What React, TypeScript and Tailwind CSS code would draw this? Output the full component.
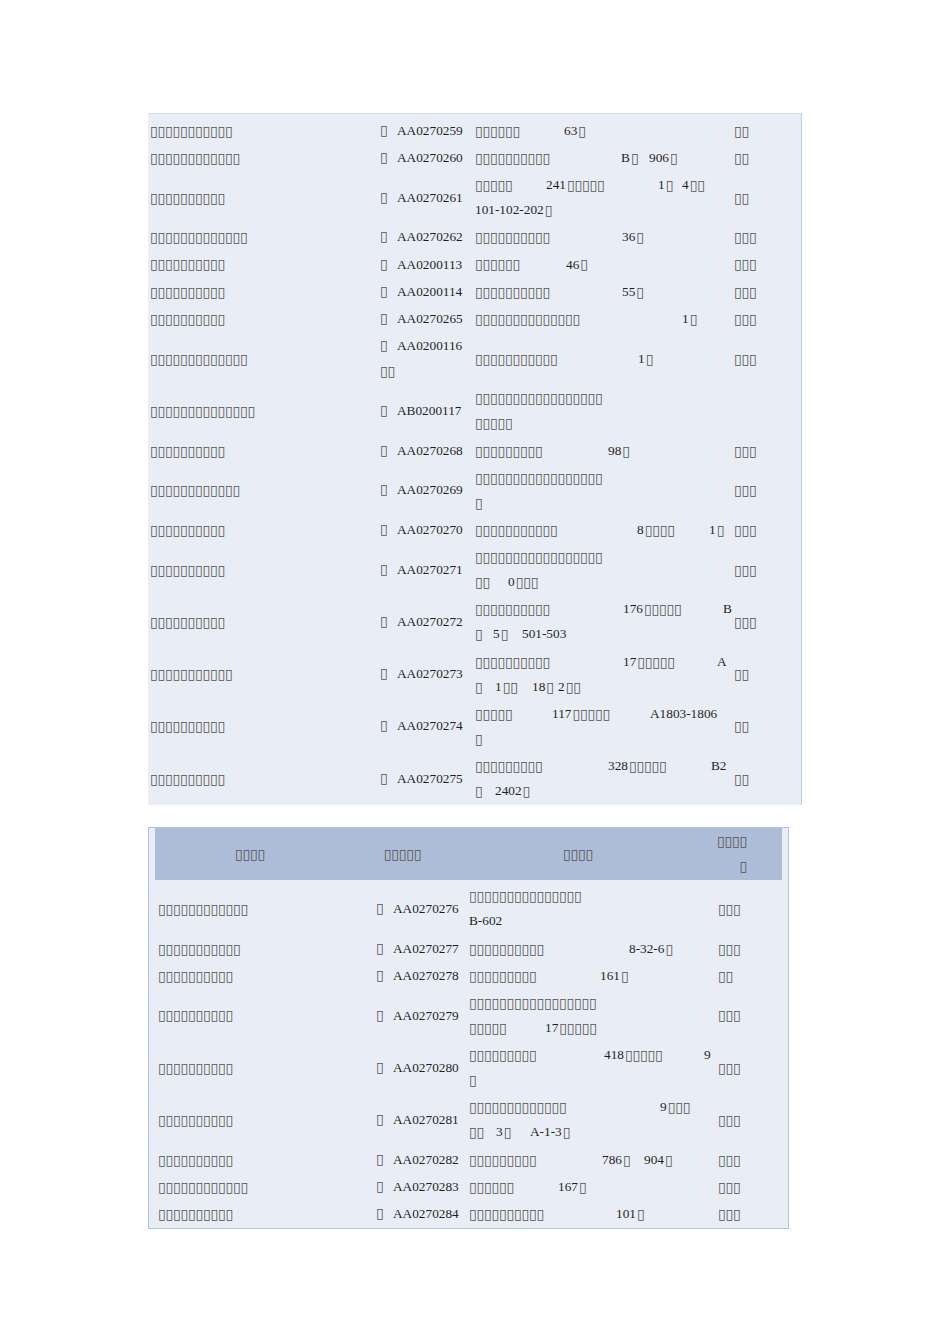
import React from "react";

type Piece = [string, number]; // text, x offset inside the cell
type Row = { name: number; code: string[]; addr: Piece[][]; last: number };

const b = (n: number) => "□".repeat(n);

// first table (no header)
const firstRows: Row[] = [
  { name: 11, code: ["□ AA0270259"], addr: [[[b(6), 0], ["63□", 89]]], last: 2 },
  { name: 12, code: ["□ AA0270260"], addr: [[[b(10), 0], ["B□", 146], ["906□", 174]]], last: 2 },
  {
    name: 10,
    code: ["□ AA0270261"],
    addr: [
      [[b(5), 0], ["241" + b(5), 71], ["1□", 183], ["4□□", 207]],
      [["101-102-202□", 0]],
    ],
    last: 2,
  },
  { name: 13, code: ["□ AA0270262"], addr: [[[b(10), 0], ["36□", 147]]], last: 3 },
  { name: 10, code: ["□ AA0200113"], addr: [[[b(6), 0], ["46□", 91]]], last: 3 },
  { name: 10, code: ["□ AA0200114"], addr: [[[b(10), 0], ["55□", 147]]], last: 3 },
  { name: 10, code: ["□ AA0270265"], addr: [[[b(14), 0], ["1□", 207]]], last: 3 },
  { name: 13, code: ["□ AA0200116", "□□"], addr: [[[b(11), 0], ["1□", 163]]], last: 3 },
  { name: 14, code: ["□ AB0200117"], addr: [[[b(17), 0]], [[b(5), 0]]], last: 0 },
  { name: 10, code: ["□ AA0270268"], addr: [[[b(9), 0], ["98□", 133]]], last: 3 },
  { name: 12, code: ["□ AA0270269"], addr: [[[b(17), 0]], [[b(1), 0]]], last: 3 },
  { name: 10, code: ["□ AA0270270"], addr: [[[b(11), 0], ["8" + b(4), 162], ["1□", 234]]], last: 3 },
  { name: 10, code: ["□ AA0270271"], addr: [[[b(17), 0]], [[b(2), 0], ["0□□□", 33]]], last: 3 },
  {
    name: 10,
    code: ["□ AA0270272"],
    addr: [
      [[b(10), 0], ["176" + b(5), 148], ["B", 248]],
      [[b(1), 0], ["5□", 18], ["501-503", 47]],
    ],
    last: 3,
  },
  {
    name: 11,
    code: ["□ AA0270273"],
    addr: [
      [[b(10), 0], ["17" + b(5), 148], ["A", 242]],
      [[b(1), 0], ["1□□", 20], ["18□", 57], ["2□□", 83]],
    ],
    last: 2,
  },
  {
    name: 10,
    code: ["□ AA0270274"],
    addr: [
      [[b(5), 0], ["117" + b(5), 77], ["A1803-1806", 175]],
      [[b(1), 0]],
    ],
    last: 2,
  },
  {
    name: 10,
    code: ["□ AA0270275"],
    addr: [
      [[b(9), 0], ["328" + b(5), 133], ["B2", 236]],
      [[b(1), 0], ["2402□", 20]],
    ],
    last: 2,
  },
];

// second table (with header)
const secondRows: Row[] = [
  { name: 12, code: ["□ AA0270276"], addr: [[[b(15), 0]], [["B-602", 0]]], last: 3 },
  { name: 11, code: ["□ AA0270277"], addr: [[[b(10), 0], ["8-32-6□", 160]]], last: 3 },
  { name: 10, code: ["□ AA0270278"], addr: [[[b(9), 0], ["161□", 131]]], last: 2 },
  { name: 10, code: ["□ AA0270279"], addr: [[[b(17), 0]], [[b(5), 0], ["17" + b(5), 76]]], last: 3 },
  {
    name: 10,
    code: ["□ AA0270280"],
    addr: [
      [[b(9), 0], ["418" + b(5), 135], ["9", 235]],
      [[b(1), 0]],
    ],
    last: 3,
  },
  {
    name: 10,
    code: ["□ AA0270281"],
    addr: [
      [[b(13), 0], ["9□□□", 191]],
      [[b(2), 0], ["3□", 27], ["A-1-3□", 61]],
    ],
    last: 3,
  },
  { name: 10, code: ["□ AA0270282"], addr: [[[b(9), 0], ["786□", 133], ["904□", 175]]], last: 3 },
  { name: 12, code: ["□ AA0270283"], addr: [[[b(6), 0], ["167□", 89]]], last: 3 },
  { name: 10, code: ["□ AA0270284"], addr: [[[b(10), 0], ["101□", 147]]], last: 3 },
];

function Box() {
  return (
    <span className="inline-block w-[7.5px] text-center font-['DejaVu_Sans',sans-serif] text-[14px] leading-none text-[#555]">
      ▯
    </span>
  );
}

// text with missing-glyph boxes
function Txt({ s }: { s: string }) {
  const parts = s.split(/(□)/).filter(Boolean);
  return (
    <>
      {parts.map((p, i) =>
        p === "□" ? (
          <Box key={i} />
        ) : (
          <span key={i} className="mr-px">
            {p}
          </span>
        )
      )}
    </>
  );
}

function Line({ pieces }: { pieces: Piece[] }) {
  return (
    <div className="flex h-[25px] items-center whitespace-nowrap">
      {pieces.map(([t, x], i) => {
        const next = pieces[i + 1];
        return (
          <span key={i} className="flex shrink-0 items-center" style={next ? { width: next[1] - x } : undefined}>
            <Txt s={t} />
          </span>
        );
      })}
    </div>
  );
}

function Code({ line }: { line: string }) {
  if (!line.startsWith("□ ")) return <Line pieces={[[line, 0]]} />;
  return (
    <div className="flex h-[25px] items-center whitespace-nowrap">
      <span className="inline-block w-[17px]">
        <Box />
      </span>
      <span>{line.slice(2)}</span>
    </div>
  );
}

type Widths = { c1: string; c2: string; c3: string; c4: string };

function TableRow({ row, w }: { row: Row; w: Widths }) {
  return (
    <div className="flex py-[1.12px]">
      <div className={`flex flex-col justify-center ${w.c1}`}>
        <Line pieces={[[b(row.name), 0]]} />
      </div>
      <div className={`flex flex-col justify-center ${w.c2}`}>
        {row.code.map((c, i) => (
          <Code key={i} line={c} />
        ))}
      </div>
      <div className={`flex flex-col justify-center ${w.c3}`}>
        {row.addr.map((l, i) => (
          <Line key={i} pieces={l} />
        ))}
      </div>
      <div className={`flex flex-col justify-center ${w.c4}`}>
        {row.last > 0 && <Line pieces={[[b(row.last), 0]]} />}
      </div>
    </div>
  );
}

const firstW: Widths = {
  c1: "w-[229px] pl-[2px]",
  c2: "w-[95px] pl-[3px]",
  c3: "w-[259px] pl-[3px]",
  c4: "flex-1 pl-[3px]",
};

const secondW: Widths = {
  c1: "w-[218px] pl-[3px]",
  c2: "w-[93px] pl-[3px]",
  c3: "w-[249px] pl-[3px]",
  c4: "w-[67px] pl-[3px]",
};

export default function App() {
  return (
    <div className="min-h-[1344px] w-[950px] bg-white pt-[113px] font-['Liberation_Serif',serif] text-[13.3px] text-[#1f1f1f]">
      <div className="ml-[148px] w-[654px] border-t border-r border-t-[#d6dbe1] border-r-[#b8d0e4] bg-[#e9eef6] pt-[3px]">
        {firstRows.map((r, i) => (
          <TableRow key={i} row={r} w={firstW} />
        ))}
      </div>

      <div className="ml-[148px] mt-[22px] w-[641px] border border-[#a9c7df] bg-[#e9eef6] px-[6px]">
        <div className="flex h-[52px] items-center bg-[#adbcd7]">
          <div className="flex w-[190px] justify-center">
            <Txt s={b(4)} />
          </div>
          <div className="flex w-[115px] justify-center">
            <Txt s={b(5)} />
          </div>
          <div className="flex w-[236px] justify-center">
            <Txt s={b(4)} />
          </div>
          <div className="flex flex-1 flex-col items-end pr-[35px]">
            <Line pieces={[[b(4), 0]]} />
            <Line pieces={[[b(1), 0]]} />
          </div>
        </div>
        <div className="pt-[3px]">
          {secondRows.map((r, i) => (
            <TableRow key={i} row={r} w={secondW} />
          ))}
        </div>
      </div>
    </div>
  );
}
